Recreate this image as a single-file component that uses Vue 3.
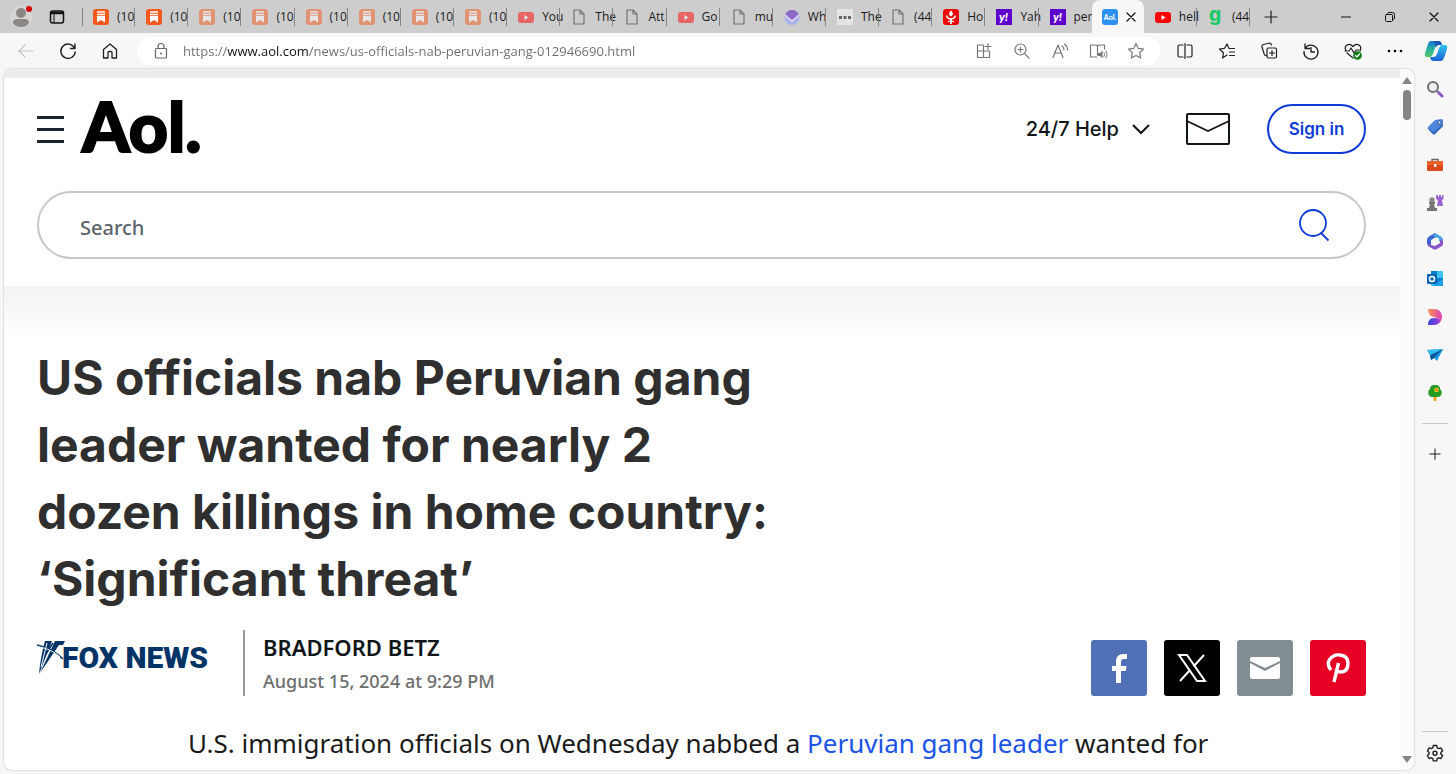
<template>
  <div class="browser">
    <!-- 标签栏 -->
    <div class="tab-bar">
      <button class="profile" aria-label="Profile">
        <svg width="26" height="26" viewBox="0 0 26 26">
          <circle cx="12" cy="13" r="11" fill="#d8d6d4"/>
          <circle cx="12" cy="9" r="5" fill="#8b8783"/>
          <path d="M4 19c0-3 2-4 4-4h8c2 0 4 1 4 4-2 3-5 4-8 4s-6-1-8-4z" fill="#8b8783"/>
          <circle cx="20" cy="5" r="3" fill="#d40000"/>
        </svg>
      </button>
      <button class="workspace" aria-label="Tab actions">
        <svg width="16" height="16" viewBox="0 0 16 16" v-html="icons.workspace"></svg>
      </button>
      <div class="tabs">
        <button v-for="(tab, index) in tabs" :key="index" class="tab"
                :class="{'tab-active': index === activeTab, 'tab-plain': index === activeTab - 1}"
                @click="activeTab = index">
          <svg class="favicon" :class="{faded: tab.faded}" width="16" height="16" viewBox="0 0 16 16"
               v-html="favicons[tab.icon]"></svg>
          <svg v-if="index === activeTab" width="10" height="10" viewBox="0 0 10 10" v-html="icons.close"></svg>
          <span v-else class="tab-title">{{ tab.title }}</span>
        </button>
      </div>
      <button class="new-tab" aria-label="New tab">
        <svg width="14" height="14" viewBox="0 0 14 14" v-html="icons.plus"></svg>
      </button>
      <div class="window-controls">
        <button v-for="name in ['minimize', 'restore', 'close']" :key="name" :aria-label="name">
          <svg width="10" height="10" viewBox="0 0 10 10" v-html="icons[name]"></svg>
        </button>
      </div>
    </div>

    <!-- 工具栏 -->
    <div class="toolbar">
      <button v-for="name in ['back', 'reload', 'home']" :key="name" class="tool" :aria-label="name">
        <svg width="20" height="20" viewBox="0 0 20 20" v-html="icons[name]"></svg>
      </button>
      <div class="address">
        <svg class="lock" width="20" height="20" viewBox="0 0 20 20" v-html="icons.lock"></svg>
        <input v-model="url" type="text" aria-label="Address">
        <button v-for="name in ['apps', 'zoom', 'readAloud', 'reader', 'star']" :key="name" :aria-label="name">
          <svg width="20" height="20" viewBox="0 0 20 20" v-html="icons[name]"></svg>
        </button>
      </div>
      <button v-for="name in ['split', 'favorites', 'collections', 'history', 'health', 'more']" :key="name"
              class="tool" :aria-label="name">
        <svg width="20" height="20" viewBox="0 0 20 20" v-html="icons[name]"></svg>
      </button>
      <button class="copilot" aria-label="Copilot">
        <svg width="24" height="24" viewBox="0 0 24 24" v-html="icons.copilot"></svg>
      </button>
    </div>

    <div class="workarea">
      <div class="frame">
        <div class="page">
          <div class="page-strip"></div>
          <header class="header">
            <div class="header-row">
              <button class="menu" aria-label="Menu"><i></i><i></i><i></i></button>
              <a href="#" class="logo">Aol.</a>
              <button class="help">24/7 Help
                <svg width="18" height="12" viewBox="0 0 18 12">
                  <path d="M1 2l8 8 8-8" fill="none" stroke="#101518" stroke-width="2"/>
                </svg>
              </button>
              <a href="#" class="mail" aria-label="Mail">
                <svg width="44" height="32" viewBox="0 0 44 32" fill="none" stroke="#101518" stroke-width="2">
                  <rect x="1" y="1" width="42" height="30" rx="1"/>
                  <path d="M1 8l21 10L43 8" stroke-width="1.7"/>
                </svg>
              </a>
              <a href="#" class="sign-in">Sign in</a>
            </div>
            <form class="search" @submit.prevent>
              <input v-model="keyword" type="text" placeholder="Search" aria-label="Search">
              <button aria-label="Submit search">
                <svg width="32" height="34" viewBox="0 0 32 34" fill="none" stroke="#0f3bd8" stroke-width="1.8">
                  <circle cx="15" cy="15" r="13"/>
                  <path d="M23 25L30.500 32.500"/>
                </svg>
              </button>
            </form>
          </header>

          <article class="article">
            <h1>US officials nab Peruvian gang leader wanted for nearly 2 dozen killings in home country: ‘Significant threat’</h1>
            <div class="byline">
              <a href="#" class="source">
                <svg width="28" height="36" viewBox="0 0 28 36">
                  <path d="M8 1h7L2 34C3 22 5 12 8 1zM18 1h10l-2 4h-4L3 33z" fill="#003366"/>
                  <path d="M0 5c9 2 18 6 26 14M16 3L5 20" fill="none" stroke="#003366" stroke-width="1.600"/>
                  <path d="M1 7c9 1 17 5 22 10M10 3L4 27" fill="none" stroke="#fff" stroke-width="1"/>
                </svg>
                <span>FOX NEWS</span>
              </a>
              <div class="author">
                <p class="author-name">BRADFORD BETZ</p>
                <p class="author-date">August 15, 2024 at 9:29 PM</p>
              </div>
              <div class="share">
                <a v-for="item in shares" :key="item.name" href="#" :class="item.name" :aria-label="item.name">
                  <svg width="32" height="32" viewBox="0 0 32 32" v-html="item.svg"></svg>
                </a>
              </div>
            </div>
            <p class="story">U.S. immigration officials on Wednesday nabbed a <a href="#">Peruvian gang leader</a> wanted for</p>
          </article>
        </div>
        <div class="scrollbar">
          <svg width="10" height="8" viewBox="0 0 10 8"><path d="M5 0l5 7H0z" fill="#858585"/></svg>
          <div class="thumb"></div>
          <svg width="10" height="8" viewBox="0 0 10 8"><path d="M0 0h10L5 7z" fill="#858585"/></svg>
        </div>
      </div>

      <!-- 侧边栏 -->
      <nav class="sidebar">
        <button v-for="name in sideApps" :key="name" :aria-label="name">
          <svg width="18" height="18" viewBox="0 0 18 18" v-html="sideIcons[name]"></svg>
        </button>
        <hr>
        <button class="side-add" aria-label="Customize">
          <svg width="12" height="12" viewBox="0 0 14 14" v-html="icons.plus"></svg>
        </button>
        <hr class="side-bottom">
        <button aria-label="Settings">
          <svg width="20" height="20" viewBox="0 0 20 20" v-html="icons.gear"></svg>
        </button>
      </nav>
    </div>
  </div>
</template>

<script setup>
import {ref} from "vue";

let activeTab = ref(19)
let keyword = ref('')
let url = ref('https://www.aol.com/news/us-officials-nab-peruvian-gang-012946690.html')

//标签页
let tabs = [
  {icon: 'substack', title: '(10'},
  {icon: 'substack', title: '(10'},
  {icon: 'substack', title: '(10', faded: true},
  {icon: 'substack', title: '(10', faded: true},
  {icon: 'substack', title: '(10', faded: true},
  {icon: 'substack', title: '(10', faded: true},
  {icon: 'substack', title: '(10', faded: true},
  {icon: 'substack', title: '(10', faded: true},
  {icon: 'youtube', title: 'You', faded: true},
  {icon: 'file', title: 'The'},
  {icon: 'file', title: 'Att'},
  {icon: 'youtube', title: 'Go', faded: true},
  {icon: 'file', title: 'mu'},
  {icon: 'globe', title: 'Wh'},
  {icon: 'dots', title: 'The'},
  {icon: 'file', title: '(44'},
  {icon: 'torch', title: 'Ho'},
  {icon: 'yahoo', title: 'Yah'},
  {icon: 'yahoo', title: 'per'},
  {icon: 'aol', title: 'Aol'},
  {icon: 'youtube', title: 'hell'},
  {icon: 'grin', title: '(44'},
]

let favicons = {
  substack: '<rect width="16" height="16" rx="3" fill="#f4581b"/><path d="M4 3h8M4 5.500h8" stroke="#fff" stroke-width="1.300"/><path d="M4 7h8v6.500L8 11l-4 2.500z" fill="#fff"/>',
  youtube: '<rect y="3" width="16" height="11" rx="3" fill="#f00"/><path d="M6.500 6v5l4-2.500z" fill="#fff"/>',
  file: '<path d="M3 1h6l4 4v10H3zM9 1v4h4" fill="none" stroke="#737373" stroke-width="1.200" stroke-linejoin="round"/>',
  globe: '<circle cx="8" cy="8.500" r="7.500" fill="#a9b2ea"/><path d="M1 6C3 2 5 1 8 1s5 1 7 5l-7 6z" fill="#8d68c4"/><path d="M1 6l7 6 7-6" fill="none" stroke="#e6e4f5" stroke-width="1.500"/>',
  dots: '<rect width="16" height="16" fill="#e4e4e4"/><path d="M2 7h3v3H2zM6.500 7h3v3h-3zM11 7h3v3h-3z" fill="#666"/>',
  torch: '<rect width="16" height="16" rx="3" fill="#ee0505"/><path d="M8 1.500c3 3 2 5 0 6-2-1-3-3 0-6z" fill="#fff"/><path d="M3.500 6.500q1 3.500 4.500 3.500t4.500-3.500" fill="none" stroke="#fff" stroke-width="1.500"/><path d="M7 9.500h2V15H7zM5 12h6v1H5z" fill="#fff"/>',
  yahoo: '<rect width="16" height="16" fill="#5e00cb"/><text x="7.500" y="11.500" text-anchor="middle" font-family="Lato, sans-serif" font-size="12" font-weight="900" font-style="italic" fill="#fff">y!</text>',
  aol: '<rect width="16" height="16" rx="3" fill="#2d91f2"/><text x="8" y="10.500" text-anchor="middle" font-family="Lato, sans-serif" font-size="7" font-weight="900" fill="#fff">Aol.</text>',
  grin: '<text x="7" y="11.500" text-anchor="middle" font-family="Inter, sans-serif" font-size="19" font-weight="800" fill="#18cb67">g</text>',
}

const line = (d, color = '#1f1f1f', width = 1.2) => `<path d="${d}" fill="none" stroke="${color}" stroke-width="${width}" stroke-linecap="round" stroke-linejoin="round"/>`

let icons = {
  workspace: '<rect x="1.500" y="2" width="13" height="12" rx="2" fill="none" stroke="#111" stroke-width="1.500"/><path d="M2 4h12" stroke="#111" stroke-width="2.500"/><path d="M5 5v9" stroke="#111"/>',
  plus: line('M7 1v12M1 7h12'),
  minimize: line('M0 5h10', '#111', 1),
  restore: line('M2.500 2V1.500Q3 .5 4 .5h3.500q2 0 2 2V6q0 1-1 1.500M1.500 2.500H6.500q1 0 1 1V8.500q0 1-1 1H1.500q-1 0-1-1V3.500q0-1 1-1z', '#111', 1),
  close: line('M1 1l8 8M9 1L1 9', '#111', 1.2),
  back: line('M17 10H3M9 4l-6 6 6 6', '#c5c5c5'),
  reload: line('M16.500 7A7.200 7.200 0 1 0 17.200 11M17 3v4.500h-4.500', '#1f1f1f', 1.4),
  home: line('M3.500 8.500L10 3l6.500 5.500V17H12v-5.500q0-1-1-1H9q-1 0-1 1V17H3.500z', '#1f1f1f', 1.3),
  lock: line('M5.500 7.500h9q1 0 1 1V16q0 1-1 1h-9q-1 0-1-1V8.500q0-1 1-1zM7 7.500V5.500a3 3 0 0 1 6 0v2', '#666') + '<circle cx="10" cy="12.500" r="1" fill="#666"/>',
  apps: line('M3.500 4H9.500V16.500H3.500zM3.500 10H15.500V16.500H9.500M14 2.500v6M11 5.500h6', '#777'),
  zoom: line('M12.800 12.800L17 17M8.500 6v5M6 8.500h5', '#777') + '<circle cx="8.500" cy="8.500" r="5.500" fill="none" stroke="#777" stroke-width="1.200"/>',
  readAloud: line('M3 16.500L8 4l5 12.500M5 12h6M12 5q2 1 2 4M14.500 3q3 2 3 6', '#777'),
  reader: line('M8.500 16H2.500V4H8l1.500 1L11 4h5.500v4M9.500 5v9', '#777') + '<path d="M10 12h2l2.500-2.500v8L12 15h-2z" fill="#777"/>' + line('M16 11.500q1.500 2 0 4M18 10q2.500 3.500 0 7', '#777', 1),
  star: line('M10 2.500l2.300 4.900 5.200.7-3.800 3.700.9 5.300-4.600-2.600-4.600 2.600.9-5.300L2.500 8.100l5.200-.7z', '#777'),
  split: line('M8 4H4.500Q3 4 3 5.500v9Q3 16 4.500 16H8M12 4h3.500Q17 4 17 5.500v9q0 1.500-1.500 1.500H12M10 2.500v15'),
  favorites: line('M10 14l-4.500 3 1-5L2.500 8l5-.7L10 3l2 4.500h5.500M12.500 11h5M12.500 14.500h5'),
  collections: line('M8 14.500Q5.500 15 5 12.500L3 6Q2.500 4 4.500 3.500l6-1.500Q12 2 12.500 4M13 9.500v5M10.500 12h5M9 7h7q1.500 0 1.500 1.500v7Q17.500 17 16 17H9.500Q8 17 8 15.500v-7Q8 7 9 7z'),
  history: line('M4 3v4.500h4.500M4 7.500A7 7 0 1 1 3 10.500M10 6.500V11h3.500', '#1f1f1f', 1.3),
  health: line('M3 10Q1 6 4 4t6 1.500Q13 2 16 4t1 6M2 10h4l2-3 3 5 2-3h3M4 12l6 5') + '<circle cx="14.500" cy="14.500" r="4.300" fill="#107c10"/>' + line('M12.500 14.500l1.500 1.500 2.500-3', '#fff'),
  more: '<circle cx="4" cy="10" r="1.300"/><circle cx="10" cy="10" r="1.300"/><circle cx="16" cy="10" r="1.300"/>',
  copilot: `<defs><linearGradient id="cpa" x1="0" y1="0" x2="0" y2="1"><stop stop-color="#1b6fd8"/><stop offset=".5" stop-color="#24b4a0"/><stop offset="1" stop-color="#5cc867"/></linearGradient><linearGradient id="cpb" x1="0" y1="0" x2="0" y2="1"><stop stop-color="#33c5f2"/><stop offset="1" stop-color="#1861d6"/></linearGradient></defs>
    <path d="M7 2h8q2 0 3 4H14q-2 0-3 3l-2 6q-1 3-3 3H3q-3 0-2-4L4 5q1-3 3-3z" fill="url(#cpa)"/>
    <path d="M17 22H9q-2 0-3-4h4q2 0 3-3l2-6q1-3 3-3h3q3 0 2 4l-3 9q-1 3-3 3z" fill="url(#cpb)"/>
    <path d="M10 2h5q2 0 3 4h-4l-2 2z" fill="#1758ba"/>`,
  gear: line('M8.300 2.500h3.400l.5 2.300 1.500.8 2.200-.7 1.700 2.900-1.700 1.600v1.600l1.700 1.600-1.700 2.900-2.200-.7-1.500.8-.5 2.300H8.300l-.5-2.300-1.500-.8-2.200.7-1.700-2.900L4.100 11V9.400L2.400 7.800l1.700-2.900 2.200.7 1.500-.8z', '#1f1f1f', 1.4) + '<circle cx="10" cy="10.200" r="2" fill="none" stroke="#1f1f1f" stroke-width="1.400"/>',
}

//侧边栏应用
let sideApps = ['search', 'shopping', 'tools', 'games', 'office', 'outlook', 'designer', 'drop', 'tree']

let sideIcons = {
  search: '<circle cx="7" cy="7" r="5" fill="#eee" stroke="#707070" stroke-width="2"/><path d="M11 11l2 2" stroke="#707070" stroke-width="2"/><path d="M12.500 12.500l3.500 3.500" stroke="#8d5ac5" stroke-width="3" stroke-linecap="round"/>',
  shopping: '<path d="M9 2l7-1 1 1v6l-8 8q-1 1-2 0L2 11q-1-1 0-2z" fill="#4f86dc"/><path d="M2 11l5 5q1 1 2 0l8-8V6l-9 8z" fill="#3566bd"/><circle cx="13.500" cy="4.500" r="1.500" fill="#fff" stroke="#234a90"/>',
  tools: '<path d="M6 6V3.500h6V6" fill="none" stroke="#666" stroke-width="1.500"/><rect x="1" y="5" width="16" height="10" rx="1" fill="#d84a1b"/><path d="M1 5h16v4H1z" fill="#ef6129"/><rect x="8" y="8" width="2.500" height="3" fill="#eee"/>',
  games: '<path d="M10 1h2v2h1V1h2v2h1V1h1.500v4L16 6l1 6h-6l1-6-2-1z" fill="#9965d2"/><circle cx="6" cy="6" r="2.700" fill="#888"/><path d="M3 8h6v2H8l1 4h2v3H1v-3h2l1-4H3z" fill="#767676"/>',
  office: '<path d="M9 1L3 4.500Q1 6 1 8v4l4 2V8l7-4z" fill="#3764cf"/><path d="M9 1l6 3.500q2 1 2 3.500v3l-4-2V6.500L7 4z" fill="#46a4e6"/><path d="M17 9v3q0 1-1 2l-5 3q-2 1-4 0l-5-3-1-3 4 2 4 1 5-3v-4z" fill="#8956c9"/><circle cx="9" cy="9" r="2.800" fill="#f7f7f7"/>',
  outlook: '<rect x="5" y="1" width="12" height="15" rx="1" fill="#3cc3f2"/><path d="M5 1h6v8H5zM11 8h6v8h-6z" fill="#0b7bd0"/><path d="M6 16l11-7v6q0 1-1 1z" fill="#1aa2e7"/><rect x="1" y="4" width="10" height="10" rx="1" fill="#0864b4"/><circle cx="6" cy="9" r="2.500" fill="none" stroke="#fff" stroke-width="1.500"/>',
  designer: '<defs><linearGradient id="dsa"><stop stop-color="#ff9052"/><stop offset="1" stop-color="#dc43bd"/></linearGradient><linearGradient id="dsb"><stop stop-color="#3446d7"/><stop offset="1" stop-color="#a140dc"/></linearGradient></defs><path d="M2 1h6q7 0 8 7 0 5-3 7 0-5-5-6Q2 8 2 1z" fill="url(#dsa)"/><path d="M2 17q0-7 6-7t6 4q-2 3-6 3z" fill="url(#dsb)"/>',
  drop: '<path d="M1 4l16-1-6 12-3-3-3 2-1-5z" fill="#1a9ae0"/><path d="M4 9l13-6-9 9-3 2z" fill="#0d5898"/><path d="M1 4l16-1L4 9z" fill="#38bdf1"/>',
  tree: '<rect x="7.500" y="12" width="3" height="5" rx="1" fill="#f4a51f"/><path d="M9 1c4 0 5 2 5 4 3 2 2 8-2 8H6c-4 0-5-6-2-8 0-2 1-4 5-4z" fill="#249b22"/><circle cx="10.500" cy="6" r="2.300" fill="#f7c42d"/><circle cx="10.500" cy="6" r="1" fill="#c7690c"/>',
}

//分享按钮
let shares = [
  {name: 'facebook', svg: '<path d="M13 31V19H9v-5h4v-4q0-8 7-8h4v5h-3q-3 0-3 3v4h5.500l-.700 5H18v12z" fill="#fff"/>'},
  {name: 'twitter', svg: '<path d="M3 3h8l18 26h-8zM28 3L17.500 14.500M14 18L4 29" fill="none" stroke="#fff" stroke-width="2"/>'},
  {name: 'email', svg: '<path d="M1 7q0-2 2-2h26q2 0 2 2v2l-15 7L1 9zM1 11l15 8 15-8v14q0 2-2 2H3q-2 0-2-2z" fill="#fff"/>'},
  {name: 'pinterest', svg: '<path d="M12 30L16.500 11M9 18Q4 12 8 7t10-4q8 1 8 8 0 9-7 9-4 0-5-3" fill="none" stroke="#fff" stroke-width="3.400"/>'},
]
</script>

<style>
body {
  background: #f7f7f7;
}
</style>

<style scoped>
* {
  box-sizing: border-box;
}

.browser {
  display: flex;
  flex-direction: column;
  height: 100vh;
  overflow: hidden;
  background: #f7f7f7;
  font-family: "Open Sans", sans-serif;
}

button {
  display: flex;
  align-items: center;
  justify-content: center;
  padding: 0;
  border: 0;
  background: none;
  font-family: inherit;
  cursor: pointer;
}

svg {
  flex-shrink: 0;
}

p, h1 {
  margin: 0;
}

a {
  text-decoration: none;
}

/*标签栏*/
.tab-bar {
  display: flex;
  height: 33px;
  flex-shrink: 0;
  background: #cdcdcd;
}

.profile {
  width: 44px;
}

.workspace {
  width: 26px;
}

.tabs {
  display: flex;
  flex: 0 1 1180px;
  min-width: 0;
  padding-left: 12px;
}

.tab {
  position: relative;
  flex: 1;
  min-width: 0;
  gap: 8px;
  justify-content: flex-start;
  padding-left: 11px;
}

.tab::after {
  position: absolute;
  top: 8px;
  right: 0;
  width: 1px;
  height: 18px;
  background: #858585;
  content: "";
}

.tab:first-child::before {
  position: absolute;
  top: 8px;
  left: 0;
  width: 1px;
  height: 18px;
  background: #858585;
  content: "";
}

.tab-active {
  border-radius: 8px 8px 0 0;
  background: #f7f7f7;
  padding-left: 10px;
}

.tab-active::after, .tab-plain::after {
  display: none;
}

.faded {
  opacity: 0.5;
}

.tab-title {
  white-space: nowrap;
  font-size: 12px;
  line-height: 18px;
  color: #1a1a1a;
}

.new-tab {
  width: 42px;
}

.window-controls {
  display: flex;
  margin-left: auto;
}

.window-controls button {
  width: 44px;
}

/*工具栏*/
.toolbar {
  display: flex;
  align-items: center;
  flex-shrink: 0;
  height: 36px;
  padding-left: 5px;
}

.tool {
  width: 42px;
  height: 32px;
}

.copilot {
  width: 40px;
  height: 32px;
}

.address {
  display: flex;
  align-items: center;
  flex: 1;
  height: 28px;
  margin: 0 4px 0 6px;
  padding: 0 5px 0 14px;
  border-radius: 14px;
  background: #fff;
}

.address input {
  flex: 1;
  min-width: 0;
  margin-left: 12px;
  padding: 0;
  border: 0;
  outline: none;
  font-family: "Open Sans", sans-serif;
  font-size: 13px;
  color: transparent;
  background: linear-gradient(to right, #6c6c6c 44px, #111 44px, #111 126px, #6c6c6c 126px);
  background-clip: text;
}

.address button {
  width: 38px;
}

/*页面*/
.workarea {
  display: flex;
  flex: 1;
  min-height: 0;
}

.frame {
  display: flex;
  flex: 1;
  min-width: 0;
  margin: 0 0 4px 4px;
  overflow: hidden;
  border-radius: 8px;
  background: #fff;
  box-shadow: 0 0 2px #aaa;
}

.page {
  flex: 1;
  min-width: 0;
  overflow: hidden;
}

.page-strip {
  height: 9px;
  background: #ececec;
}

.scrollbar {
  display: flex;
  flex-direction: column;
  align-items: center;
  width: 14px;
  padding: 8px 0 6px;
  background: #fcfcfc;
}

.thumb {
  width: 8px;
  height: 30px;
  margin: 5px 0 auto;
  border-radius: 4px;
  background: #858585;
}

.header {
  padding: 26px 34px 27px 33px;
}

.header-row {
  display: flex;
  align-items: center;
  height: 50px;
  margin-bottom: 37px;
}

.menu {
  flex-direction: column;
  gap: 9px;
  width: 27px;
}

.menu i {
  width: 27px;
  height: 3px;
  background: #1b2230;
}

.logo {
  margin: 0 auto 0 18px;
  padding-bottom: 6px;
  font-family: Lato, sans-serif;
  font-size: 68px;
  font-weight: 900;
  line-height: 50px;
  color: #000;
  -webkit-text-stroke: 2px #000;
}

.help {
  gap: 13px;
  font-family: Inter, sans-serif;
  font-size: 20px;
  font-weight: 500;
  color: #101518;
}

.mail {
  display: flex;
  margin: 0 37px 0 36px;
}

.sign-in {
  width: 99px;
  height: 50px;
  border: 2px solid #0f3bd8;
  border-radius: 25px;
  font-family: Inter, sans-serif;
  font-size: 17px;
  font-weight: 600;
  line-height: 46px;
  text-align: center;
  color: #0f3bd8;
}

.search {
  display: flex;
  align-items: center;
  height: 68px;
  padding: 0 34px 0 41px;
  border: 2px solid #c4c8cd;
  border-radius: 34px;
}

.search input {
  flex: 1;
  min-width: 0;
  padding: 4px 0 0;
  border: 0;
  outline: none;
  background: none;
  font-family: "Noto Sans", sans-serif;
  font-size: 20px;
  font-weight: 500;
}

.search input::placeholder {
  color: #5b636a;
}

/*文章*/
.article {
  padding: 58px 34px 0 33px;
  background: linear-gradient(#f3f3f3, #fff 54px);
}

.article h1 {
  max-width: 760px;
  margin-bottom: 18px;
  font-family: Inter, sans-serif;
  font-size: 48px;
  font-weight: 700;
  line-height: 67px;
  color: #2f2f2f;
}

.byline {
  display: flex;
  height: 66px;
}

.source {
  display: flex;
  align-items: flex-start;
  width: 208px;
  padding-top: 10px;
  border-right: 2px solid #999;
  font-family: Roboto, sans-serif;
  font-size: 30px;
  font-weight: 900;
  line-height: 36px;
  white-space: nowrap;
  color: #003366;
}

.source span {
  margin-left: -3px;
}

.author {
  flex: 1;
  padding-left: 18px;
  font-family: "Noto Sans", sans-serif;
}

.author-name {
  font-size: 22px;
  font-weight: 600;
  line-height: 34px;
  color: #101518;
}

.author-date {
  font-size: 18px;
  font-weight: 500;
  line-height: 34px;
  color: #6e6e6e;
}

.share {
  display: flex;
  align-self: flex-end;
  gap: 17px;
}

.share a {
  display: flex;
  align-items: center;
  justify-content: center;
  width: 56px;
  height: 56px;
  border-radius: 3px;
}

.facebook {
  background: #4f70b5;
}

.twitter {
  background: #000;
}

.email {
  background: #828d92;
}

.pinterest {
  background: #e60023;
}

.story {
  margin: 27px 151px 0;
  font-family: "Noto Sans", sans-serif;
  font-size: 26px;
  line-height: 40px;
  white-space: nowrap;
  color: #1a1a1a;
}

.story a {
  color: #1a53e6;
}

/*侧边栏*/
.sidebar {
  display: flex;
  flex-direction: column;
  align-items: center;
  width: 42px;
  padding: 1px 0 2px;
}

.sidebar button {
  width: 38px;
  height: 38px;
}

.sidebar hr {
  width: 26px;
  margin: 11px 0;
  border: 0;
  border-top: 1px solid #c8c8c8;
}

.sidebar .side-bottom {
  margin: auto 0 2px;
}
</style>
